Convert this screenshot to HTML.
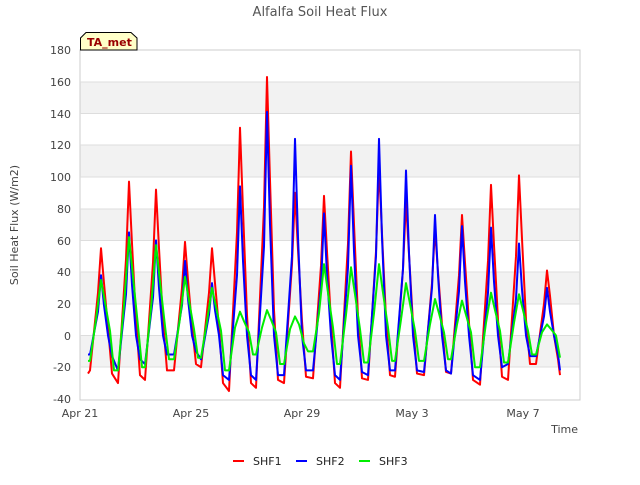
<!DOCTYPE html>
<html><head><meta charset="utf-8"><style>
body{margin:0;background:#fff;width:640px;height:480px;overflow:hidden}
text{font-family:"DejaVu Sans","Liberation Sans",sans-serif}
</style></head><body>
<svg width="640" height="480" xmlns="http://www.w3.org/2000/svg">
<text x="320" y="16" text-anchor="middle" font-size="13" fill="#555">Alfalfa Soil Heat Flux</text>
<rect x="80" y="50" width="500" height="350" fill="#fff" stroke="#ccc"/>
<g fill="#f2f2f2">
<rect x="80.5" y="82" width="499" height="32"/>
<rect x="80.5" y="145" width="499" height="32"/>
<rect x="80.5" y="209" width="499" height="32"/>
<rect x="80.5" y="272" width="499" height="32"/>
<rect x="80.5" y="335.5" width="499" height="32"/>
</g>
<g stroke="#ddd" stroke-width="1">
<line x1="80" x2="580" y1="82" y2="82"/><line x1="80" x2="580" y1="113.5" y2="113.5"/>
<line x1="80" x2="580" y1="145" y2="145"/><line x1="80" x2="580" y1="177" y2="177"/>
<line x1="80" x2="580" y1="209" y2="209"/><line x1="80" x2="580" y1="240.5" y2="240.5"/>
<line x1="80" x2="580" y1="272" y2="272"/><line x1="80" x2="580" y1="304" y2="304"/>
<line x1="80" x2="580" y1="335.5" y2="335.5"/><line x1="80" x2="580" y1="367" y2="367"/>
</g>
<g font-size="11" fill="#444" text-anchor="end">
<text x="71" y="54">180</text><text x="71" y="86">160</text><text x="71" y="118">140</text>
<text x="71" y="149">120</text><text x="71" y="181">100</text><text x="71" y="213">80</text>
<text x="71" y="245">60</text><text x="71" y="276">40</text><text x="71" y="308">20</text>
<text x="71" y="340">0</text><text x="71" y="371">-20</text><text x="71" y="403">-40</text>
</g>
<g font-size="11" fill="#444" text-anchor="middle">
<text x="80" y="417">Apr 21</text><text x="191" y="417">Apr 25</text><text x="302" y="417">Apr 29</text>
<text x="412" y="417">May 3</text><text x="523" y="417">May 7</text>
</g>
<text x="578" y="433" font-size="11" fill="#444" text-anchor="end">Time</text>
<text transform="translate(18,225) rotate(-90)" font-size="11" fill="#444" text-anchor="middle">Soil Heat Flux (W/m2)</text>
<g transform="translate(0,335.5) scale(1,-1.586)" fill="none" stroke-width="2" stroke-linejoin="round">
<polyline vector-effect="non-scaling-stroke" stroke="#f00" points="88,-24 90,-22 98,27 101,55 104,33 108,5 112,-24 118,-30 126,48 129,97 132,58 136,10 140,-25 145,-28 153,46 156,92 159,55 163,9 167,-22 174,-22 182,30 185,59 188,35 192,6 196,-18 201,-20 209,27 212,55 215,33 219,5 223,-30 229,-35 237,65 240,131 243,79 247,13 251,-30 256,-33 264,81 267,163 270,98 274,16 278,-28 284,-30 292,45 295,90 298,54 302,9 306,-26 313,-27 321,44 324,88 327,53 331,9 335,-30 340,-33 348,58 351,116 354,70 358,12 362,-27 368,-28 376,53 379,107 382,64 386,11 390,-25 395,-26 403,42 406,85 409,51 413,8 417,-24 424,-25 432,33 435,67 438,40 442,7 446,-23 451,-24 459,38 462,76 465,46 469,8 473,-28 480,-31 488,47 491,95 494,57 498,10 502,-26 508,-28 516,50 519,101 522,61 526,10 530,-18 536,-18 544,20 547,41 550,25 554,0 558,-15 560,-25"/>
<polyline vector-effect="non-scaling-stroke" stroke="#00f" points="88,-12 90,-12 98,15 101,38 104,19 108,0 112,-13 118,-22 126,26 129,65 132,32 136,0 140,-15 145,-18 153,24 156,60 159,30 163,0 167,-12 174,-12 182,19 185,47 188,23 192,0 196,-10 201,-15 209,13 212,33 215,16 219,0 223,-25 229,-28 237,38 240,94 243,47 247,0 251,-25 256,-28 264,56 267,141 270,70 274,0 278,-25 284,-25 292,50 295,124 298,62 302,0 306,-22 313,-22 321,31 324,77 327,38 331,0 335,-25 340,-28 348,43 351,107 354,53 358,0 362,-23 368,-25 376,50 379,124 382,62 386,0 390,-22 395,-22 403,42 406,104 409,52 413,0 417,-22 424,-23 432,30 435,76 438,38 442,0 446,-22 451,-24 459,28 462,69 465,34 469,0 473,-25 480,-28 488,27 491,68 494,34 498,0 502,-20 508,-18 516,23 519,58 522,29 526,0 530,-13 536,-13 544,12 547,30 550,15 554,0 558,-12 560,-22"/>
<polyline vector-effect="non-scaling-stroke" stroke="#0e0" points="88,-16 90,-16 96,10 101,35 105,21 110,3 114,-22 118,-22 124,19 129,62 133,37 138,6 142,-20 145,-20 151,17 156,57 160,34 165,6 169,-15 174,-15 180,11 185,37 189,22 194,4 198,-14 201,-14 207,9 212,30 216,18 221,3 225,-22 229,-22 235,5 240,15 244,9 249,2 253,-12 256,-12 262,5 267,16 271,10 276,2 280,-18 284,-18 290,4 295,12 299,7 304,-5 308,-10 313,-10 319,14 324,45 328,27 333,5 337,-18 340,-18 346,13 351,43 355,26 360,4 364,-17 368,-17 374,14 379,45 383,27 388,5 392,-16 395,-16 401,10 406,33 410,20 415,3 419,-16 424,-16 430,7 435,23 439,14 444,2 448,-15 451,-15 457,7 462,22 466,13 471,2 475,-20 480,-20 486,8 491,27 495,16 500,3 504,-17 508,-17 514,8 519,26 523,16 528,3 532,-12 536,-12 542,2 547,7 551,4 556,0 560,-14"/>
</g>
<path d="M80.5,50 L80.5,38 L86,32.5 L131,32.5 L137,38 L137,50 Z" fill="#ffffc8" stroke="#000" stroke-width="1"/>
<text x="87" y="46" font-size="11" font-weight="bold" fill="#900">TA_met</text>
<g stroke-width="2">
<line x1="233" x2="244" y1="461" y2="461" stroke="#f00"/>
<line x1="296" x2="307" y1="461" y2="461" stroke="#00f"/>
<line x1="359" x2="370" y1="461" y2="461" stroke="#0e0"/>
</g>
<g font-size="11" fill="#222">
<text x="253" y="465">SHF1</text><text x="316" y="465">SHF2</text><text x="379" y="465">SHF3</text>
</g>
</svg>
</body></html>
